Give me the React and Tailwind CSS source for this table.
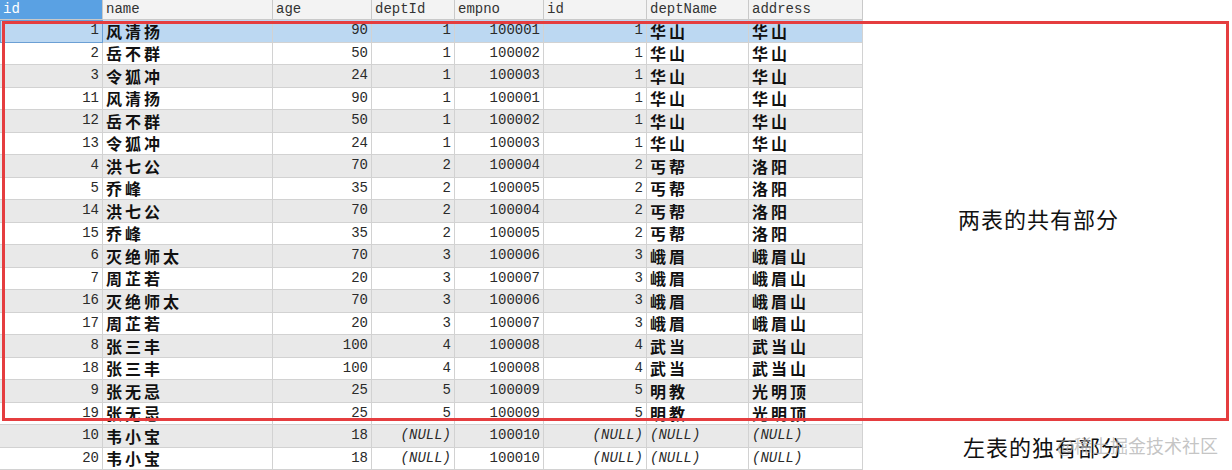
import React from "react";

const cols = ["id", "name", "age", "deptId", "empno", "id", "deptName", "address"];

const rows = [
  [1, "风清扬", 90, 1, 100001, 1, "华山", "华山"],
  [2, "岳不群", 50, 1, 100002, 1, "华山", "华山"],
  [3, "令狐冲", 24, 1, 100003, 1, "华山", "华山"],
  [11, "风清扬", 90, 1, 100001, 1, "华山", "华山"],
  [12, "岳不群", 50, 1, 100002, 1, "华山", "华山"],
  [13, "令狐冲", 24, 1, 100003, 1, "华山", "华山"],
  [4, "洪七公", 70, 2, 100004, 2, "丐帮", "洛阳"],
  [5, "乔峰", 35, 2, 100005, 2, "丐帮", "洛阳"],
  [14, "洪七公", 70, 2, 100004, 2, "丐帮", "洛阳"],
  [15, "乔峰", 35, 2, 100005, 2, "丐帮", "洛阳"],
  [6, "灭绝师太", 70, 3, 100006, 3, "峨眉", "峨眉山"],
  [7, "周芷若", 20, 3, 100007, 3, "峨眉", "峨眉山"],
  [16, "灭绝师太", 70, 3, 100006, 3, "峨眉", "峨眉山"],
  [17, "周芷若", 20, 3, 100007, 3, "峨眉", "峨眉山"],
  [8, "张三丰", 100, 4, 100008, 4, "武当", "武当山"],
  [18, "张三丰", 100, 4, 100008, 4, "武当", "武当山"],
  [9, "张无忌", 25, 5, 100009, 5, "明教", "光明顶"],
  [19, "张无忌", 25, 5, 100009, 5, "明教", "光明顶"],
  [10, "韦小宝", 18, null, 100010, null, null, null],
  [20, "韦小宝", 18, null, 100010, null, null, null],
];

// columns holding chinese text are left aligned, numbers go right
const textCols = [1, 6, 7];

function Cell({ v, ci, focus }) {
  const isText = textCols.includes(ci);
  const base = "h-[22.5px] border-r border-b border-[#d2d2d2] flex items-center overflow-hidden whitespace-nowrap";
  if (v === null) {
    return (
      <div className={`${base} ${isText ? "justify-start pl-[3px]" : "justify-end pr-[3px]"} font-mono italic text-[14px] text-[#2a2a2a]`}>
        (NULL)
      </div>
    );
  }
  if (isText) {
    return (
      <div className={`${base} justify-start pl-[3px] font-cjk text-[16px] font-semibold text-[#111] tracking-[3px]`}>
        {v}
      </div>
    );
  }
  return (
    <div className={`${base} justify-end pr-[3px] font-mono text-[14px] text-[#2a2a2a] ${focus ? "outline outline-1 -outline-offset-1 outline-[#6b9fd4]" : ""}`}>
      {v}
    </div>
  );
}

export default function App() {
  return (
    <div className="relative w-[1232px] h-[470px] bg-white overflow-hidden [&_.font-mono]:font-['Liberation_Mono',monospace] [&_.font-cjk]:font-['Noto_Sans_CJK_SC',sans-serif]">
      <div className="flex">
        {/* grid of the query result */}
        <div className="grid grid-cols-[103px_170px_99px_83px_89px_103px_102px_114px] w-[863px] shrink-0">
          {cols.map((c, i) => (
            <div
              key={"h" + i}
              className={`h-[20px] flex items-center pl-[3px] border-r border-b border-[#c9c9c9] font-mono text-[14px] ${i === 0 ? "bg-[#5aa1e3] text-white" : "bg-[#f3f3f3] text-[#333]"}`}
            >
              {c}
            </div>
          ))}
          {rows.map((r, ri) => (
            <div
              key={ri}
              className={`contents ${ri === 0 ? "[&>div]:bg-[#bcd8f2]" : ri % 2 === 0 ? "[&>div]:bg-[#e9e9e9]" : "[&>div]:bg-white"}`}
            >
              {r.map((v, ci) => (
                <Cell key={ci} v={v} ci={ci} focus={ri === 0 && ci === 0} />
              ))}
            </div>
          ))}
        </div>

        {/* labels to the right */}
        <div className="flex-1 flex flex-col font-cjk text-[22px] leading-[30px] text-[#111] tracking-[1px]">
          <div className="pt-[203px] pl-[95px]">两表的共有部分</div>
          <div className="pt-[198px] pl-[100px]">左表的独有部分</div>
        </div>
      </div>

      {/* red frame over the matched rows */}
      <div className="absolute left-[2px] top-[21px] w-[1227px] h-[400px] border-[3px] border-[#e53d3f] pointer-events-none" />

      {/* watermark */}
      <div className="absolute left-[1057px] top-[432px] font-cjk text-[18px] text-[#b5b5b5]/80">
        @稀土掘金技术社区
      </div>
    </div>
  );
}
